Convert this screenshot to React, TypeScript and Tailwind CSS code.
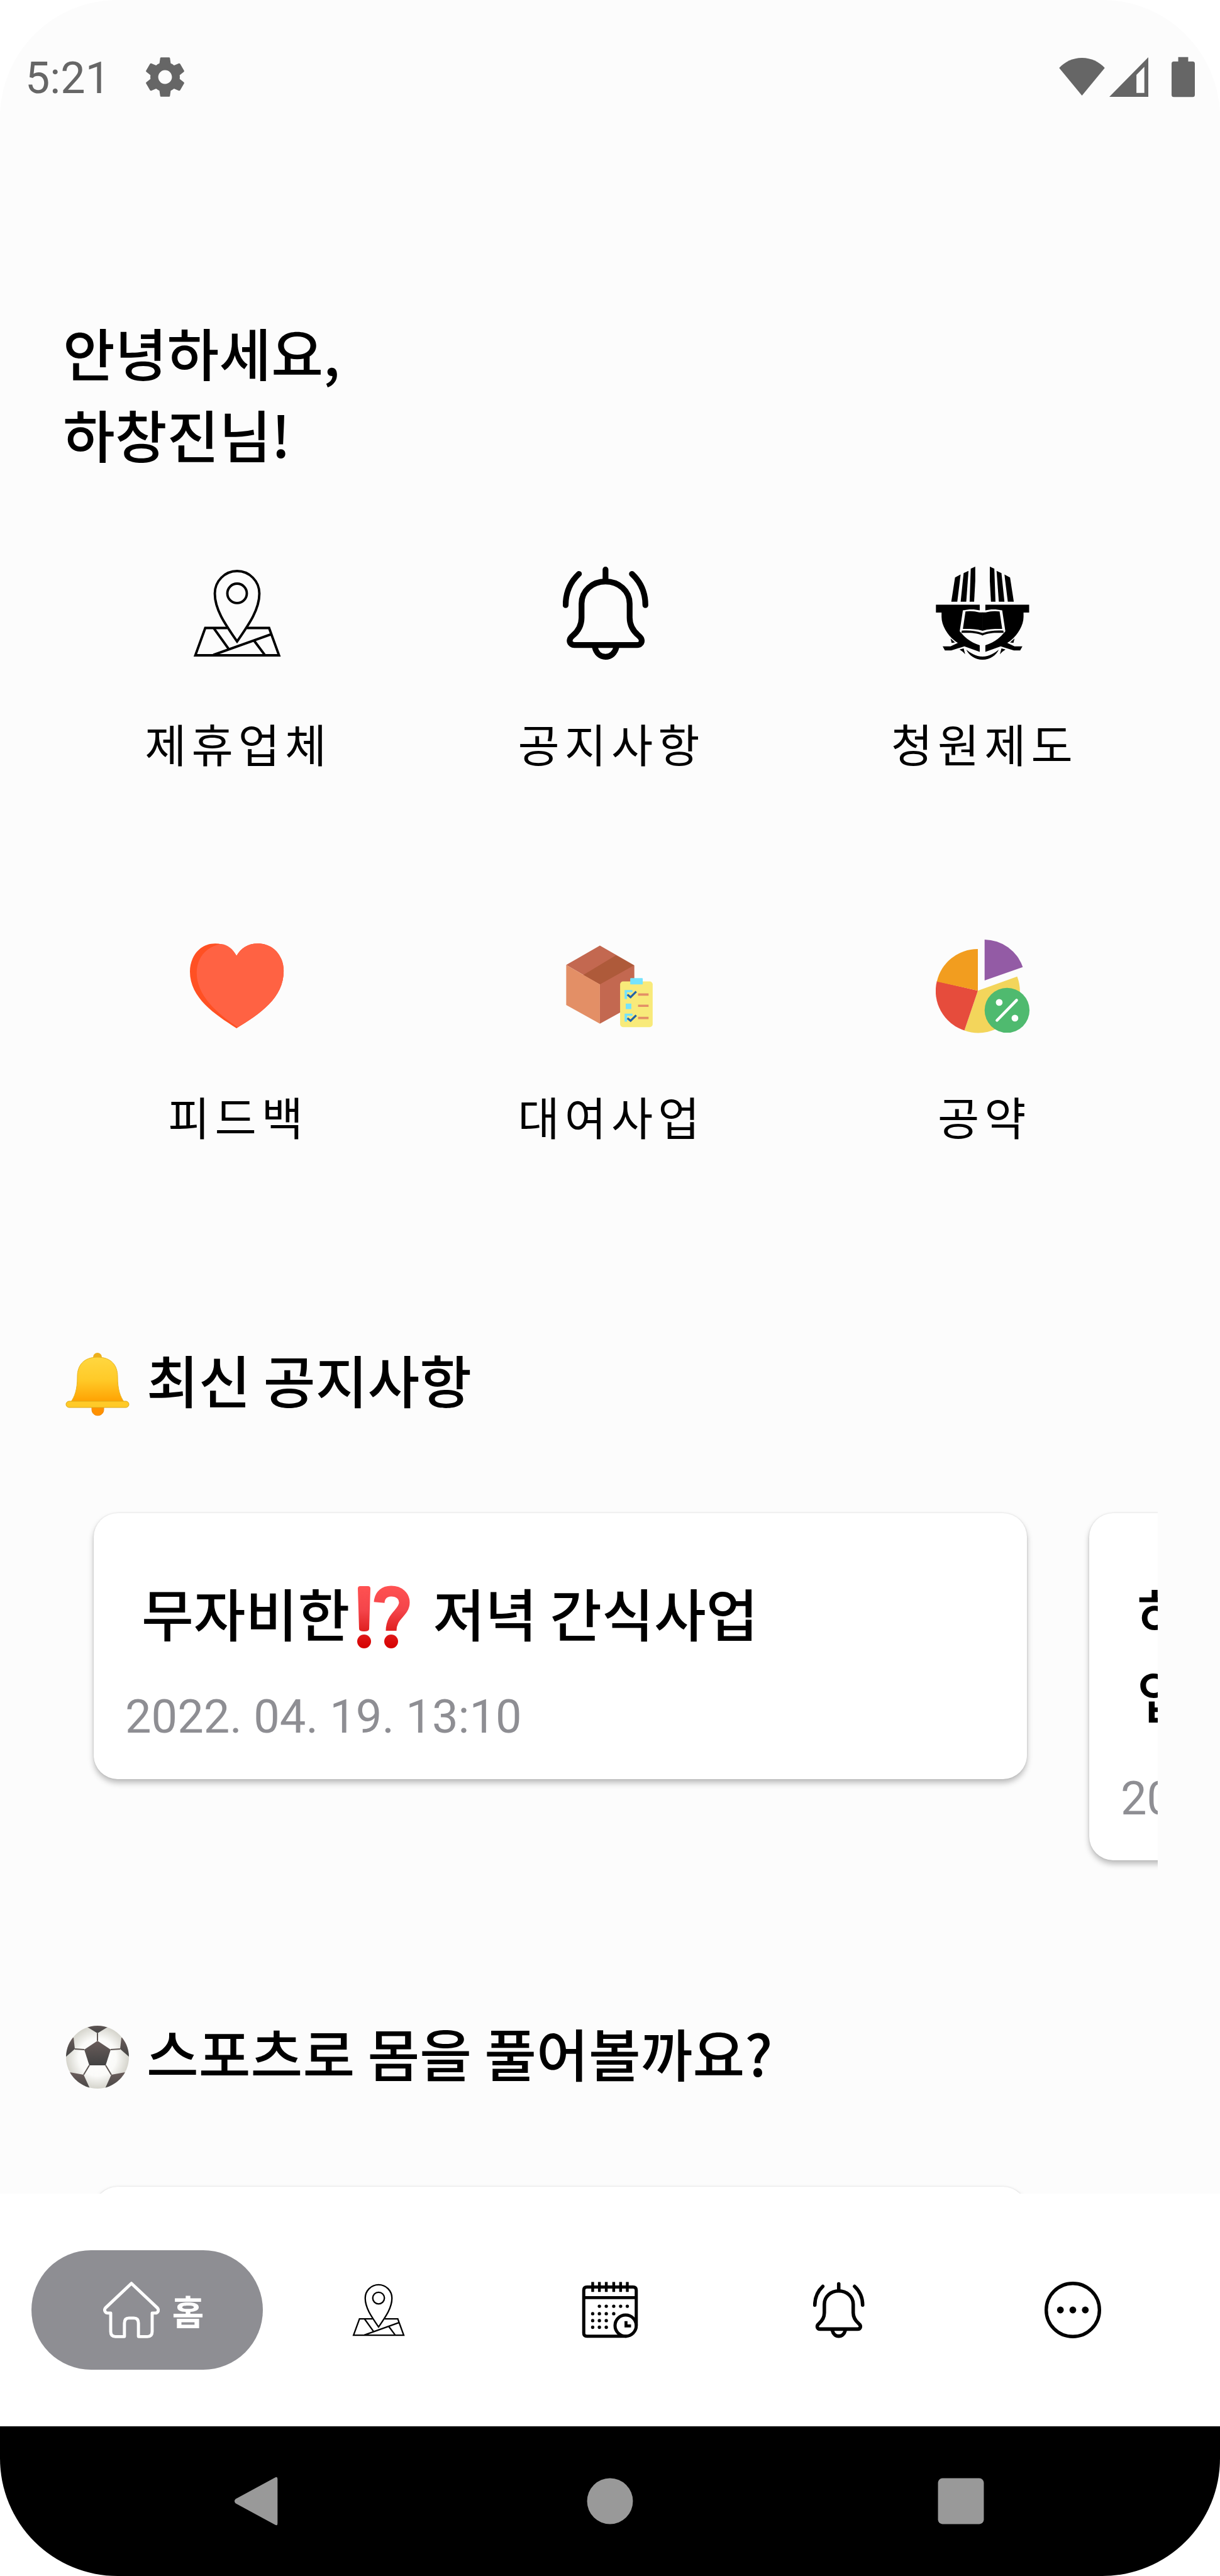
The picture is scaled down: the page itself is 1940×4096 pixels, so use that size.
import type { ReactNode } from 'react';

function GearIcon() {
  return (
    <svg viewBox="0 0 24 24" className="h-[75px] w-[75px]" fill="#666666" aria-hidden="true">
      <path d="M19.43 12.98c.04-.32.07-.64.07-.98s-.03-.66-.07-.98l2.11-1.65c.19-.15.24-.42.12-.64l-2-3.46c-.12-.22-.39-.3-.61-.22l-2.49 1c-.52-.4-1.08-.73-1.69-.98l-.38-2.65C14.46 2.18 14.25 2 14 2h-4c-.25 0-.46.18-.49.42l-.38 2.65c-.61.25-1.17.59-1.69.98l-2.49-1c-.23-.09-.49 0-.61.22l-2 3.46c-.13.22-.07.49.12.64l2.11 1.65c-.04.32-.07.65-.07.98s.03.66.07.98l-2.11 1.65c-.19.15-.24.42-.12.64l2 3.46c.12.22.39.3.61.22l2.49-1c.52.4 1.08.73 1.69.98l.38 2.65c.03.24.24.42.49.42h4c.25 0 .46-.18.49-.42l.38-2.65c.61-.25 1.17-.59 1.69-.98l2.49 1c.23.09.49 0 .61-.22l2-3.46c.12-.22.07-.49-.12-.64l-2.11-1.65zM12 15.5c-1.93 0-3.5-1.57-3.5-3.5s1.57-3.5 3.5-3.5 3.5 1.57 3.5 3.5-1.57 3.5-3.5 3.5z" />
    </svg>
  );
}

function WifiIcon() {
  return (
    <svg viewBox="0 0 81 67" className="h-[60px] w-[73px]" fill="#666666" aria-hidden="true">
      <path d="M40.500 67 L0 18 C10 7 24 0 40.500 0 C57 0 71 7 81 18 Z" />
    </svg>
  );
}

function SignalIcon() {
  return (
    <svg viewBox="0 0 69 70" className="h-[63px] w-[62px]" aria-hidden="true">
      <path fill="#666666" fillRule="evenodd" d="M0 70 L69 0 V70 Z M48 31 V63 H62 V17 Z" />
    </svg>
  );
}

function BatteryIcon() {
  return (
    <svg viewBox="0 0 42 72" className="h-[65px] w-[37px]" fill="#666666" aria-hidden="true">
      <path d="M12 8 V0 H30 V8 H38 Q42 8 42 12 V68 Q42 72 38 72 H4 Q0 72 0 68 V12 Q0 8 4 8 Z" />
    </svg>
  );
}

function PinIcon({ className }: { className: string }) {
  return (
    <svg viewBox="165 129 504 504" className={className} fill="none" stroke="#000" strokeWidth="13" aria-hidden="true">
      <path d="M417 532 C350 435 298 360 298 276 A119 120 0 0 1 536 276 C536 360 484 435 417 532 Z" />
      <circle cx="417" cy="275" r="52" />
      <path d="M364 460 H247 L194 606 H641 L588 460 H470" />
      <path d="M293 462 L372 572 M290 604 L598 494 M508 528 L565 604" />
    </svg>
  );
}

function BellIcon({ className }: { className: string }) {
  return (
    <svg viewBox="288 129 504 504" className={className} fill="none" stroke="#000" strokeWidth="31" strokeLinecap="round" strokeLinejoin="round" aria-hidden="true">
      <path d="M516 148 V205" />
      <path d="M516 212 C445 212 388 262 388 330 V405 C388 440 372 475 340 502 C314 524 324 551 350 551 H685 C710 551 720 524 694 502 C662 475 645 440 645 405 V330 C645 262 587 212 516 212 Z" />
      <path d="M459 562 C466 594 488 614 516 614 C544 614 567 594 574 562" />
      <path d="M374 171 C330 212 303 268 303 338 M657 171 C702 212 729 268 729 338" />
    </svg>
  );
}

function LogoHalf() {
  return (
    <>
      <path d="M390 190 L420 174 L402 320 H370 Z" />
      <path d="M436 167 L462 155 L450 320 H420 Z" />
      <path d="M474 143 L498 132 V210 L492 320 H468 Z" />
      <path d="M288 336 H522 V366 C496 359 462 359 432 366 L415 478 L428 492 C450 518 482 540 522 552 V588 L440 558 L370 580 H336 L324 558 H366 L405 540 C362 514 318 455 318 400 V378 H288 Z" />
      <path d="M366 516 L390 537 L372 540 Z" />
      <path d="M414 575 L436 569 L444 600 L432 588 Z" />
      <path d="M538 377 H520 C496 370 470 368 446 372 L432 465 C466 465 500 464 538 475 Z" />
      <path d="M426 474 C466 472 502 474 538 488 V500 C502 484 466 486 424 486 Z" />
      <path d="M450 576 C470 592 500 613 538 613 V630 C495 630 465 605 450 576 Z" />
    </>
  );
}

function CouncilIcon() {
  return (
    <svg viewBox="287 129 504 504" className="h-[150px] w-[150px]" fill="#000" aria-hidden="true">
      <LogoHalf />
      <g transform="translate(1074 0) scale(-1 1)">
        <LogoHalf />
      </g>
    </svg>
  );
}

function HeartIcon() {
  return (
    <svg viewBox="1 0 168 168" className="h-[150px] w-[150px]" aria-hidden="true">
      <path fill="#FF5023" d="M84 30 C76 16 62 8 46 8 C18 8 1 32 1 58 C1 105 45 134 84 159 C125 134 168 105 168 57 C168 30 150 8 122 8 C104 8 92 16 84 30 Z" />
      <path fill="#FF6243" d="M84 30 C78 18 68 10 56 9 C28 14 13 36 13 60 C13 100 48 132 86 157 C127 132 168 105 168 57 C168 30 150 8 122 8 C104 8 92 16 84 30 Z" />
    </svg>
  );
}

function BoxIcon() {
  return (
    <svg viewBox="48 39 504 504" className="h-[150px] w-[150px]" aria-hidden="true">
      <path fill="#C36850" d="M246 74 L430 180 V390 L246 492 V282 L66 178 Z" />
      <path fill="#AE5A3A" d="M332 126 L428 180 L246 282 L156 232 Z" />
      <path fill="#E38F66" d="M66 178 L246 282 V492 L66 392 Z" />
      <rect x="354" y="266" width="174" height="244" rx="16" fill="#F8EA7A" />
      <rect x="408" y="248" width="67" height="34" rx="4" fill="#75E3FD" />
      <path fill="#75E3FD" d="M378 312 H420 V324 H391 V360 H378 Z M384 384 H414 V414 H384 Z M378 438 H420 V450 H391 V481 H378 Z" />
      <path fill="none" stroke="#2161A8" strokeWidth="11" d="M393 336 L410 350 L440 320 M393 462 L410 476 L440 447" />
      <path fill="none" stroke="#E38F66" strokeWidth="12" d="M450 336 H506 M450 396 H506 M450 461 H506" />
    </svg>
  );
}

function PieIcon() {
  return (
    <svg viewBox="0 0 168 168" className="h-[150px] w-[150px]" aria-hidden="true">
      <path fill="#935BA5" d="M87 1 A73 73 0 0 1 155 50 L87 74 Z" />
      <path fill="#F3D55B" d="M75 92 L145 67 A74 74 0 0 1 51 163 Z" />
      <path fill="#E64C3C" d="M75 92 L51 163 A74 74 0 0 1 2 75 Z" />
      <path fill="#F29D1F" d="M75 92 L2 76 A74 74 0 0 1 75 18 Z" />
      <circle cx="127" cy="127" r="40" fill="#4FBA6F" />
      <path stroke="#fff" strokeWidth="5" strokeLinecap="round" d="M109 145 L144 109" />
      <circle cx="113" cy="113" r="6" fill="#fff" />
      <circle cx="141" cy="141" r="6" fill="#fff" />
    </svg>
  );
}

function BellEmoji() {
  return (
    <svg viewBox="0 0 112 130" className="h-[130px] w-[112px] shrink-0" role="img" aria-label="종">
      <defs>
        <linearGradient id="bellBody" x1="0" y1="0" x2="0" y2="1">
          <stop offset="0" stopColor="#FFD740" />
          <stop offset="0.5" stopColor="#FFCA28" />
          <stop offset="1" stopColor="#FFA000" />
        </linearGradient>
      </defs>
      <circle cx="56" cy="31" r="7" fill="#EDB01C" />
      <path d="M47 106 H66 V114 C66 127 47 127 47 114 Z" fill="#FF9100" stroke="#EF8A0A" />
      <path d="M56 31 C34 31 24 44 24 62 C24 82 20 94 13 103 H99 C92 94 88 82 88 62 C88 44 78 31 56 31 Z" fill="url(#bellBody)" stroke="#E9B41F" strokeWidth="1" />
      <rect x="6" y="101" width="100" height="10" rx="5" fill="#FFCA28" stroke="#DDA818" strokeWidth="1" />
    </svg>
  );
}

function SoccerEmoji() {
  return (
    <svg viewBox="0 0 112 130" className="h-[130px] w-[112px] shrink-0" role="img" aria-label="축구공">
      <defs>
        <radialGradient id="ballWhite" cx="0.5" cy="0.5" r="0.5">
          <stop offset="0" stopColor="#FFFFFF" />
          <stop offset="0.6" stopColor="#FAFAF8" />
          <stop offset="1" stopColor="#D5D4CC" />
        </radialGradient>
        <linearGradient id="ballDark" x1="0" y1="0" x2="0" y2="1">
          <stop offset="0" stopColor="#6A5D5B" />
          <stop offset="1" stopColor="#424242" />
        </linearGradient>
        <clipPath id="ballClip">
          <circle cx="56" cy="73" r="50" />
        </clipPath>
      </defs>
      <circle cx="56" cy="73" r="50" fill="url(#ballWhite)" />
      <g clipPath="url(#ballClip)" fill="url(#ballDark)">
        <path d="M56 47 L77 61 L69 86 H43 L35 61 Z" />
        <path d="M38 24 L56 35 L74 24 L70 18 H42 Z" />
        <path d="M4 74 L20 60 L18 42 L10 40 L0 60 Z" />
        <path d="M108 74 L92 60 L94 42 L102 40 L112 60 Z" />
        <path d="M12 97 L34 101 L44 123 L36 128 L8 110 Z" />
        <path d="M100 97 L78 101 L68 123 L76 128 L104 110 Z" />
        <path fill="none" stroke="#5E5653" strokeWidth="2" d="M56 35 V47 M77 61 L92 60 M35 61 L20 60 M69 86 L78 101 M43 86 L34 101" />
      </g>
    </svg>
  );
}

function InterrobangEmoji() {
  return (
    <svg viewBox="0 0 112 130" className="inline-block h-[130px] w-[112px] align-top" role="img" aria-label="물음느낌표">
      <defs>
        <linearGradient id="markRed" gradientUnits="userSpaceOnUse" x1="0" y1="23" x2="0" y2="123">
          <stop offset="0" stopColor="#FF5252" />
          <stop offset="0.4" stopColor="#F4444A" />
          <stop offset="0.72" stopColor="#E02020" />
          <stop offset="0.85" stopColor="#DD1010" />
          <stop offset="1" stopColor="#D50000" />
        </linearGradient>
      </defs>
      <path fill="url(#markRed)" d="M13 28 Q13 24 17 24 H29 Q33 24 33 28 L31 92 Q31 96 23 96 Q15 96 15 92 Z" />
      <circle cx="23" cy="112" r="11" fill="url(#markRed)" />
      <path fill="none" stroke="url(#markRed)" strokeWidth="17" d="M47 50 C48 37 56 32 66 32 C79 32 87 40 87 50 C87 67 66 70 66 95" />
      <circle cx="66" cy="112" r="11" fill="url(#markRed)" />
    </svg>
  );
}

function HomeIcon() {
  return (
    <svg viewBox="0 0 101 101" className="h-[90px] w-[90px]" fill="none" stroke="#fff" strokeWidth="5.500" strokeLinejoin="round" aria-hidden="true">
      <path d="M50.500 3 L4 47 C1 51 4 56 8 56 H13.500 V89 Q13.500 98 22 98 H38 V74 Q38 65 46 65 H55 Q63 65 63 74 V98 H79 Q87.500 98 87.500 89 V56 H93 C98 56 100 51 97 47 Z" />
    </svg>
  );
}

const calendarDots = [
  [153, 190], [190, 190], [230, 190], [267, 190], [303, 190],
  [117, 230], [153, 230], [190, 230], [230, 230],
  [117, 267], [153, 267], [190, 267],
  [117, 303], [153, 303], [190, 303],
];

function CalendarIcon() {
  return (
    <svg viewBox="58 58 304 304" className="h-[90px] w-[90px]" fill="none" stroke="#000" strokeWidth="17" aria-hidden="true">
      <path d="M300 351 H86 Q69 351 69 334 V104 Q69 87 86 87 H334 Q351 87 351 104 V293" />
      <path strokeWidth="16" d="M69 144 H351" />
      <path strokeWidth="15" d="M117 60 V113 M153 60 V113 M190 60 V113 M230 60 V113 M267 60 V113 M303 60 V113" />
      <circle cx="294" cy="294" r="57" />
      <path strokeWidth="16" d="M296 270 V296 H323" />
      {calendarDots.map(([x, y]) => (
        <circle key={`${x}-${y}`} cx={x} cy={y} r="9" fill="#000" stroke="none" />
      ))}
    </svg>
  );
}

function MoreIcon() {
  return (
    <svg viewBox="0 0 100 100" className="h-[90px] w-[90px]" aria-hidden="true">
      <circle cx="50" cy="50" r="47" fill="none" stroke="#000" strokeWidth="6" />
      <circle cx="28" cy="50" r="6" />
      <circle cx="50" cy="50" r="6" />
      <circle cx="72" cy="50" r="6" />
    </svg>
  );
}

const menu: { label: string; icon: ReactNode }[] = [
  { label: '제휴업체', icon: <PinIcon className="h-[150px] w-[150px]" /> },
  { label: '공지사항', icon: <BellIcon className="h-[150px] w-[150px]" /> },
  { label: '청원제도', icon: <CouncilIcon /> },
  { label: '피드백', icon: <HeartIcon /> },
  { label: '대여사업', icon: <BoxIcon /> },
  { label: '공약', icon: <PieIcon /> },
];

function SectionTitle({ icon, children }: { icon: ReactNode; children: ReactNode }) {
  return (
    <h2 className="flex items-center gap-[22px] text-[90px] leading-[130px] font-medium">
      {icon}
      {children}
    </h2>
  );
}

function NoticeCard({ title, date }: { title?: ReactNode; date?: string }) {
  return (
    <article className="min-h-[423px] w-[87.7%] shrink-0 rounded-[38px] bg-white px-[50px] pt-[92px] pb-[55px] shadow-[0_6px_10px_rgba(0,0,0,0.25),0_0_3px_rgba(0,0,0,0.12)]">
      <h3 className="px-[26px] text-[90px] leading-[130px] font-medium">{title}</h3>
      <p className="mt-[59px] font-['Roboto',sans-serif] text-[74px] leading-[86px] text-[#8e8e93]">{date}</p>
    </article>
  );
}

export default function App() {
  return (
    <div className="h-screen bg-white">
      <div className="flex h-full flex-col overflow-hidden rounded-[187px] bg-[#fcfcfc] font-['Noto_Sans_CJK_KR',sans-serif] text-black">
        <header className="flex shrink-0 items-center justify-between pt-20 pr-10 pl-[40px]">
          <div className="flex items-center gap-[50px]">
            <span className="pt-1 font-['Roboto',sans-serif] text-[70px] leading-[80px] text-[#666666]">5:21</span>
            <GearIcon />
          </div>
          <div className="flex items-center">
            <WifiIcon />
            <span className="pr-[37px] pl-[7px]">
              <SignalIcon />
            </span>
            <BatteryIcon />
          </div>
        </header>

        <main className="min-h-0 flex-1 overflow-hidden pt-[330px]">
          <h1 className="px-[100px] text-[90px] leading-[130px] font-medium">
            안녕하세요,
            <br />
            하창진님!
          </h1>

          <nav aria-label="메뉴" className="mt-4 grid grid-cols-3 px-[80px]">
            {menu.map((item) => (
              <a key={item.label} href="#" className="flex h-[593px] flex-col items-center justify-center gap-[79px]">
                {item.icon}
                <span className="pl-1 text-[72px] leading-[104px] tracking-[8px]">{item.label}</span>
              </a>
            ))}
          </nav>

          <section className="mt-[171px] px-[99px]">
            <SectionTitle icon={<BellEmoji />}>최신 공지사항</SectionTitle>
            <div className="flex items-start gap-[99px] overflow-hidden pt-[149px] pb-[50px] pl-[50px]">
              <NoticeCard
                title={
                  <>
                    무자비한
                    <InterrobangEmoji /> 저녁 간식사업
                  </>
                }
                date="2022. 04. 19. 13:10"
              />
              <NoticeCard
                title={
                  <>
                    하
                    <br />업
                  </>
                }
                date="2022"
              />
            </div>
          </section>

          <section className="mt-[190px] px-[99px]">
            <SectionTitle icon={<SoccerEmoji />}>스포츠로 몸을 풀어볼까요?</SectionTitle>
            <div className="flex items-start gap-[99px] overflow-hidden pt-[149px] pb-[50px] pl-[50px]">
              <NoticeCard />
            </div>
          </section>
        </main>

        <nav aria-label="탭" className="grid h-[370px] shrink-0 grid-cols-5 items-center bg-white px-[50px]">
          <button type="button" aria-current="page" className="flex h-[190px] items-center justify-center gap-5 rounded-full bg-[#8e8e93] pl-5 text-[55px] leading-[80px] font-bold text-white">
            <HomeIcon />홈
          </button>
          <button type="button" aria-label="제휴업체" className="flex justify-center">
            <PinIcon className="h-[90px] w-[90px]" />
          </button>
          <button type="button" aria-label="일정" className="flex justify-center">
            <CalendarIcon />
          </button>
          <button type="button" aria-label="공지사항" className="flex justify-center">
            <BellIcon className="h-[90px] w-[90px]" />
          </button>
          <button type="button" aria-label="더보기" className="flex justify-center">
            <MoreIcon />
          </button>
        </nav>

        <footer className="flex h-[238px] shrink-0 items-center justify-center gap-[478px] bg-black">
          <button type="button" aria-label="뒤로">
            <svg viewBox="0 0 90 90" className="h-20 w-20" fill="#999999" aria-hidden="true">
              <path d="M78 5 V85 Q78 90 73 87 L3 49 Q-1 45 3 41 L73 3 Q78 0 78 5 Z" />
            </svg>
          </button>
          <button type="button" aria-label="홈으로">
            <svg viewBox="0 0 90 90" className="h-20 w-20" fill="#999999" aria-hidden="true">
              <circle cx="45" cy="45" r="41" />
            </svg>
          </button>
          <button type="button" aria-label="최근 앱">
            <svg viewBox="0 0 90 90" className="h-20 w-20" fill="#999999" aria-hidden="true">
              <rect x="4" y="4" width="82" height="82" rx="8" />
            </svg>
          </button>
        </footer>
      </div>
    </div>
  );
}
